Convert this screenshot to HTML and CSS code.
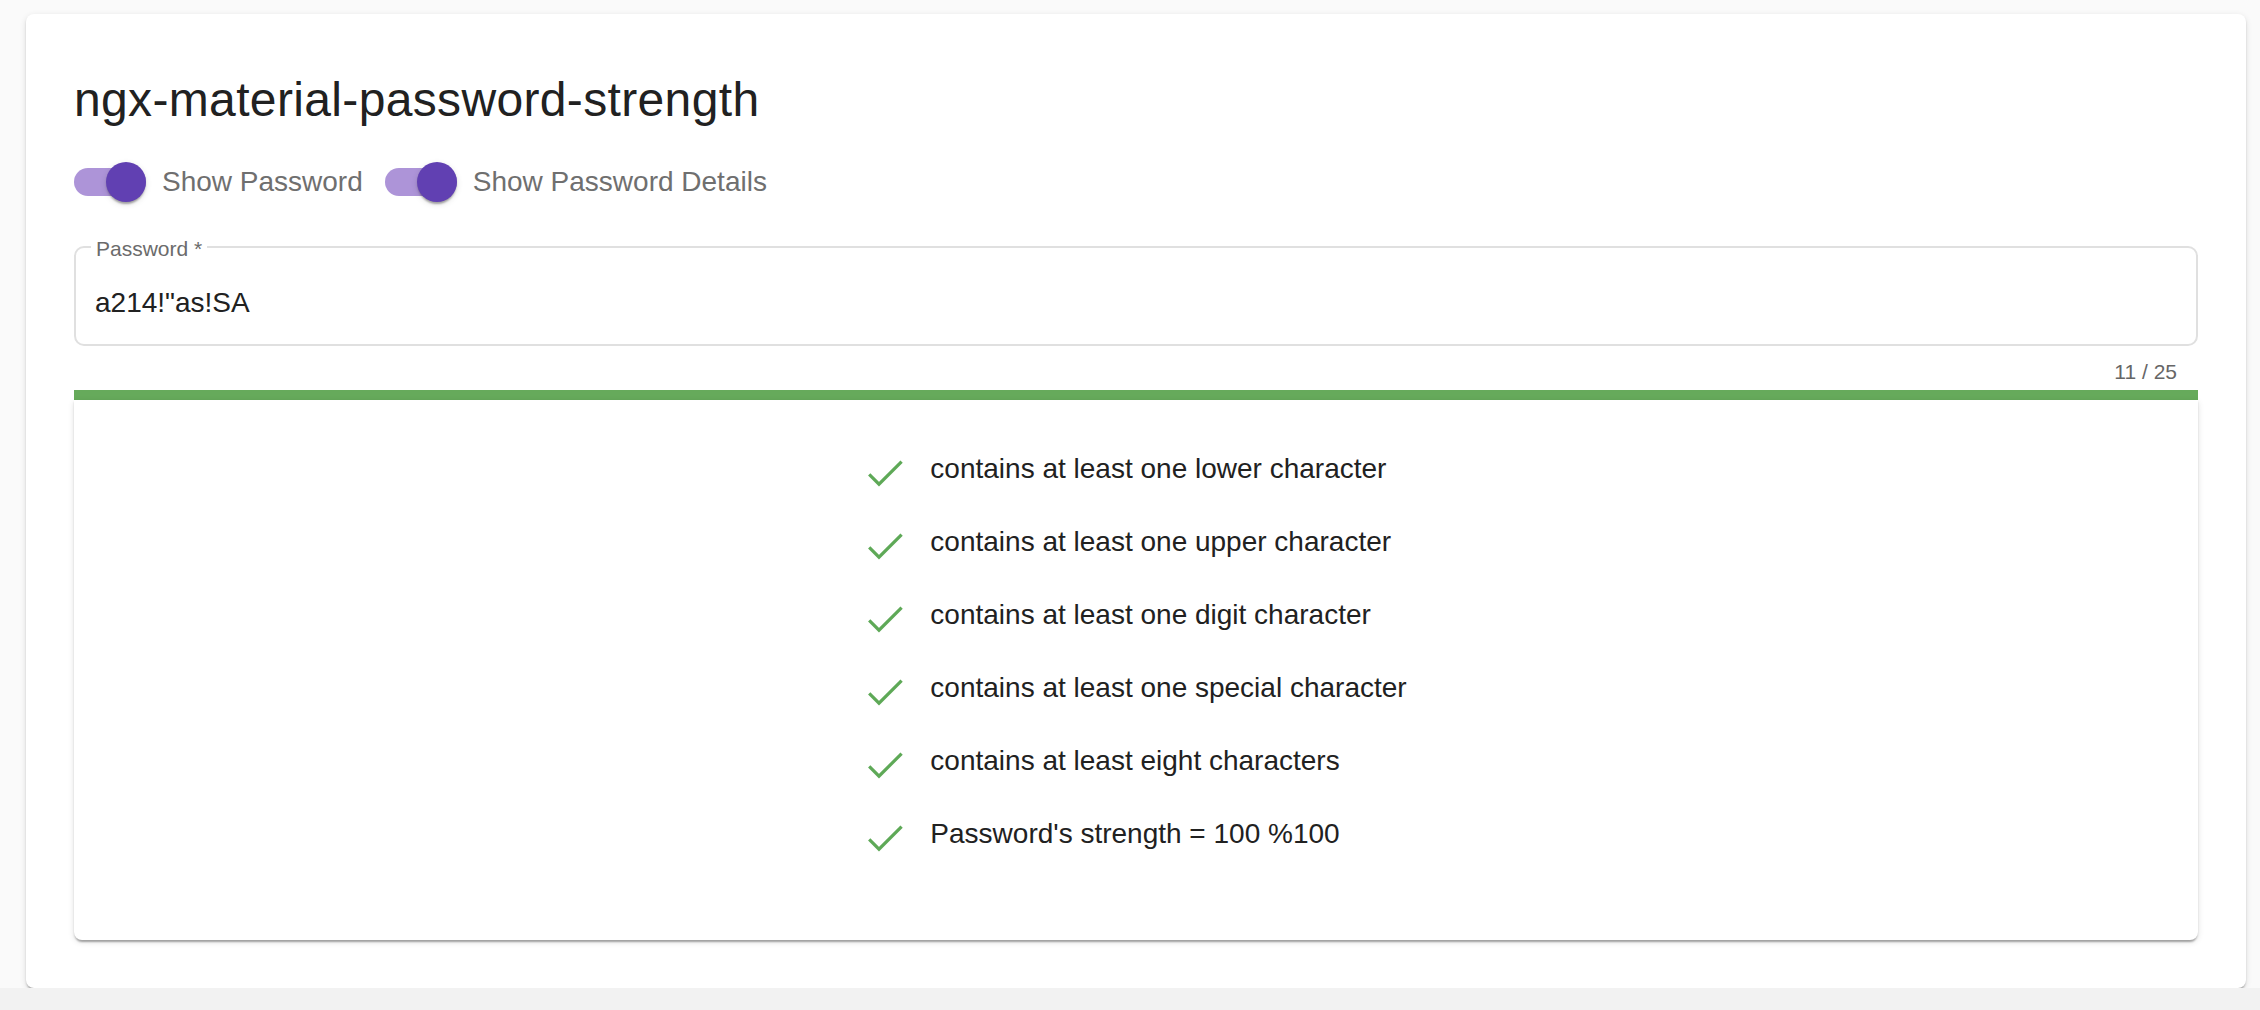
FILE: index.html
```html
<!DOCTYPE html>
<html lang="en">
<head>
<meta charset="utf-8">
<title>ngx-material-password-strength</title>
<link rel="stylesheet" href="styles.css">
</head>
<body>
<div class="page">
  <div class="card">
    <h1 class="title">ngx-material-password-strength</h1>
    <div class="toggles">
      <label class="toggle toggle-first">
        <span class="track"><span class="thumb"></span></span>
        <span class="toggle-label">Show Password</span>
      </label>
      <label class="toggle">
        <span class="track"><span class="thumb"></span></span>
        <span class="toggle-label">Show Password Details</span>
      </label>
    </div>
    <div class="field">
      <span class="field-label">Password *</span>
      <div class="field-input">a214!"as!SA</div>
    </div>
    <div class="hint">11 / 25</div>
    <div class="bar"></div>
    <div class="details">
      <ul class="rules">
        <li class="rule">
          <svg class="check" viewBox="0 0 24 24"><polyline points="4.1,12.7 9,17.6 20.3,6.3"/></svg>
          <span class="rule-text">contains at least one lower character</span>
        </li>
        <li class="rule">
          <svg class="check" viewBox="0 0 24 24"><polyline points="4.1,12.7 9,17.6 20.3,6.3"/></svg>
          <span class="rule-text">contains at least one upper character</span>
        </li>
        <li class="rule">
          <svg class="check" viewBox="0 0 24 24"><polyline points="4.1,12.7 9,17.6 20.3,6.3"/></svg>
          <span class="rule-text">contains at least one digit character</span>
        </li>
        <li class="rule">
          <svg class="check" viewBox="0 0 24 24"><polyline points="4.1,12.7 9,17.6 20.3,6.3"/></svg>
          <span class="rule-text">contains at least one special character</span>
        </li>
        <li class="rule">
          <svg class="check" viewBox="0 0 24 24"><polyline points="4.1,12.7 9,17.6 20.3,6.3"/></svg>
          <span class="rule-text">contains at least eight characters</span>
        </li>
        <li class="rule">
          <svg class="check" viewBox="0 0 24 24"><polyline points="4.1,12.7 9,17.6 20.3,6.3"/></svg>
          <span class="rule-text">Password's strength = 100 %100</span>
        </li>
      </ul>
    </div>
  </div>
</div>
</body>
</html>
```
FILE: styles.css
```css
html {
  background: #f2f2f2;
}

body {
  margin: 0;
  font-family: "Liberation Sans", Arial, Helvetica, sans-serif;
  color: #212121;
}

.page {
  background: #fafafa;
  padding: 14px 14px 0 26px;
}

.card {
  background: #fff;
  border-radius: 8px;
  padding: 54px 48px 48px;
  box-shadow: 0 4px 2px -2px rgba(0, 0, 0, 0.2), 0 2px 2px 0 rgba(0, 0, 0, 0.14), 0 2px 6px 0 rgba(0, 0, 0, 0.12);
}

.title {
  margin: 0;
  font-size: 48px;
  line-height: 64px;
  font-weight: 400;
  letter-spacing: 0.35px;
  color: #212121;
}

.toggles {
  display: flex;
  align-items: center;
  height: 48px;
  margin-top: 26px;
}

.toggle {
  display: flex;
  align-items: center;
}

.toggle-first {
  margin-right: 22px;
}

.track {
  display: flex;
  align-items: center;
  justify-content: flex-end;
  width: 72px;
  height: 28px;
  border-radius: 14px;
  background: rgba(103, 58, 183, 0.54);
  margin-right: 16px;
}

.thumb {
  flex-shrink: 0;
  width: 40px;
  height: 40px;
  border-radius: 50%;
  background: #6140b2;
  box-shadow: 0 4px 2px -2px rgba(0, 0, 0, 0.2), 0 2px 2px 0 rgba(0, 0, 0, 0.14), 0 2px 6px 0 rgba(0, 0, 0, 0.12);
}

.toggle-label {
  font-size: 28px;
  line-height: 32px;
  color: #6f6f6f;
}

.field {
  position: relative;
  margin-top: 40px;
  border: 2px solid #e0e0e0;
  border-radius: 10px;
  padding: 39px 19px 25px;
}

.field-label {
  position: absolute;
  top: -11px;
  left: 15px;
  padding: 0 5px;
  background: #fff;
  font-size: 21px;
  line-height: 24px;
  color: #6b6b6b;
}

.field-input {
  font-size: 28px;
  line-height: 32px;
  color: #212121;
  white-space: pre;
}

.hint {
  text-align: right;
  font-size: 21px;
  line-height: 24px;
  padding: 14px 21px 6px 0;
  color: #666;
}

.bar {
  height: 10px;
  background: #66aa5b;
}

.details {
  display: flex;
  justify-content: center;
  background: #fff;
  border-radius: 0 0 8px 8px;
  padding: 36px 0 66px;
  box-shadow: 0 4px 2px -2px rgba(0, 0, 0, 0.2), 0 2px 2px 0 rgba(0, 0, 0, 0.14), 0 2px 6px 0 rgba(0, 0, 0, 0.12);
}

.rules {
  list-style: none;
  margin: 0;
  padding: 0 4px 0 0;
}

.rule {
  display: flex;
  align-items: center;
  height: 73px;
}

.check {
  flex-shrink: 0;
  width: 48px;
  height: 48px;
  margin-right: 21px;
  fill: none;
  stroke: #5ea957;
  stroke-width: 1.6;
}

.rule-text {
  font-size: 28px;
  line-height: 32px;
  padding-bottom: 7px;
  color: #212121;
}
```
